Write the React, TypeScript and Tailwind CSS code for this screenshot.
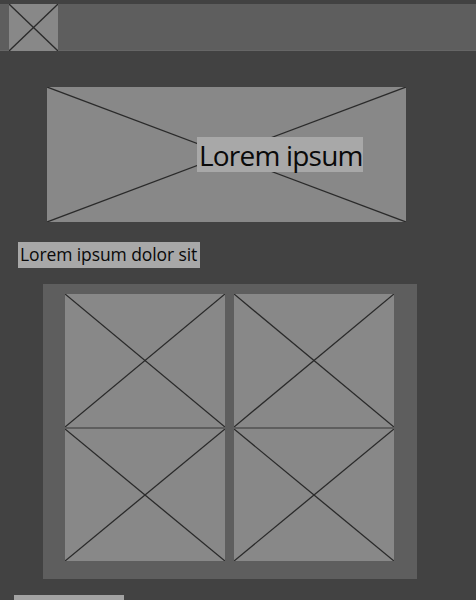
import React from "react";

function Cross() {
  return (
    <svg className="absolute inset-0 h-full w-full" viewBox="0 0 100 100" preserveAspectRatio="none">
      <line x1="0" y1="0" x2="100" y2="100" stroke="#2a2a2a" strokeWidth="1.3" vectorEffect="non-scaling-stroke" />
      <line x1="100" y1="0" x2="0" y2="100" stroke="#2a2a2a" strokeWidth="1.3" vectorEffect="non-scaling-stroke" />
    </svg>
  );
}

function Placeholder({ className, children }: { className: string; children?: React.ReactNode }) {
  return (
    <div className={`relative bg-[#888888] ${className}`}>
      <Cross />
      {children}
    </div>
  );
}

export default function App() {
  return (
    <div
      className="h-[600px] w-[476px] overflow-hidden bg-[#424242] pt-1"
      style={{ fontFamily: '"Open Sans", "DejaVu Sans", sans-serif' }}
    >
      <div className="flex h-[47px] border-b border-[#666666] bg-[#5e5e5e] pl-[9px]">
        <Placeholder className="h-[47px] w-[49px]" />
      </div>

      <div className="mt-9 pl-[47px]">
        <Placeholder className="flex h-[135px] w-[359px] items-center pl-[150px]">
          <span className="relative z-10 flex h-[35px] w-[166px] shrink-0 items-center whitespace-nowrap bg-[#a8a8a8] px-[2px] text-[28px] leading-none tracking-[-0.8px] text-[#0a0a0a]">
            Lorem ipsum
          </span>
        </Placeholder>
      </div>

      <div className="mt-5 pl-[18px]">
        <span className="inline-flex h-[26px] w-[182px] items-center whitespace-nowrap bg-[#a8a8a8] pl-[2px] text-[17.5px] leading-none tracking-[-0.1px] text-[#0a0a0a]">
          Lorem ipsum dolor sit
        </span>
      </div>

      <div className="ml-[43px] mt-4 w-[374px] bg-[#5e5e5e] pb-[18px] pl-[22px] pr-[23px] pt-[10px]">
        <div className="grid grid-cols-2 gap-x-[9px] gap-y-[2px]">
          <Placeholder className="h-[133px]" />
          <Placeholder className="h-[133px]" />
          <Placeholder className="h-[132px]" />
          <Placeholder className="h-[132px]" />
        </div>
      </div>

      <div className="ml-[14px] mt-4 h-[20px] w-[110px] bg-[#a3a3a3]" />
    </div>
  );
}
